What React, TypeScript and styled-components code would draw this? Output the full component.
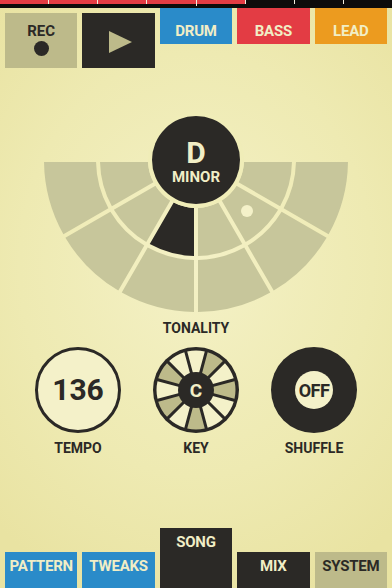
import React from 'react';
import styled, { createGlobalStyle } from 'styled-components';

// Palette
const DARK = '#2b2926';
const OLIVE = '#bdba8a';
const SEGMENT = '#c7c69b';
const PALE = '#f4f1c9';
const GAP = '#f0edb8';
const BLUE = '#2a8bc9';
const RED = '#e33c44';
const ORANGE = '#ec9b1f';
const LABEL = '#f1eec6';

const GlobalStyle = createGlobalStyle`
  html, body {
    margin: 0;
    padding: 0;
    background: #eee9b0;
  }
  * { box-sizing: border-box; }
`;

const Screen = styled.div`
  width: 392px;
  height: 588px;
  display: flex;
  flex-direction: column;
  overflow: hidden;
  background: radial-gradient(ellipse 75% 60% at 50% 45%, #f4f1c6 0%, #eeeab2 60%, #e9e3a2 100%);
  font-family: Roboto, 'Liberation Sans', sans-serif;
  font-weight: 700;
  color: ${DARK};
`;

/* progress strip at the very top */
const StepBar = styled.div`
  position: relative;
  display: flex;
  height: 8px;
  padding-bottom: 4px;
  background: #0d0c0b;
`;

const Step = styled.div<{ $done: boolean; $first: boolean }>`
  flex: 1;
  height: 4px;
  background: ${(p) => (p.$done ? RED : '#0d0c0b')};
  border-left: ${(p) => (p.$first ? 'none' : '1px solid #f2efe0')};
`;

const Playhead = styled.div`
  position: absolute;
  left: 196px;
  top: 0;
  width: 1px;
  height: 6px;
  background: #f2efe0;
`;

const Columns = styled.div<{ $align: string }>`
  display: grid;
  grid-template-columns: repeat(5, 1fr);
  column-gap: 5px;
  padding: 0 5px;
  align-items: ${(p) => p.$align};
`;

const TransportButton = styled.div<{ $bg: string }>`
  margin-top: 5px;
  height: 55px;
  background: ${(p) => p.$bg};
  display: flex;
  flex-direction: column;
  align-items: center;
  justify-content: center;
`;

const RecLabel = styled.span`
  font-size: 15px;
  line-height: 16px;
  margin-top: -2px;
`;

const RecDot = styled.span`
  width: 15px;
  height: 15px;
  margin-top: 2px;
  border-radius: 50%;
  background: ${DARK};
`;

const PlayIcon = styled.span`
  width: 0;
  height: 0;
  margin-left: 4px;
  margin-top: 3px;
  border-top: 11px solid transparent;
  border-bottom: 11px solid transparent;
  border-left: 23px solid ${OLIVE};
`;

const Tab = styled.div<{ $bg: string; $ink: string; $tall?: boolean; $top?: boolean }>`
  height: ${(p) => (p.$tall ? '60px' : '36px')};
  background: ${(p) => p.$bg};
  color: ${(p) => p.$ink};
  font-size: 15px;
  line-height: 16px;
  text-align: center;
  padding-top: ${(p) => (p.$top ? '15px' : '6px')};
  white-space: nowrap;
  letter-spacing: -0.2px;
`;

/* tonality fan */
const TonalitySection = styled.section`
  margin-top: 42px;
  display: flex;
  flex-direction: column;
  align-items: center;
`;

const Fan = styled.div`
  position: relative;
  width: 304px;
  height: 204px;
`;

const CenterDisc = styled.div`
  position: absolute;
  left: 108px;
  top: 6px;
  width: 88px;
  height: 88px;
  border-radius: 50%;
  background: ${DARK};
  box-shadow: 0 0 0 4px ${GAP};
  color: ${LABEL};
  display: flex;
  flex-direction: column;
  align-items: center;
  justify-content: center;
`;

const KeyLetter = styled.span`
  font-size: 30px;
  line-height: 26px;
  margin-top: 4px;
`;

const ModeName = styled.span`
  font-size: 15px;
  line-height: 16px;
  margin-top: 3px;
`;

const Caption = styled.div`
  font-size: 14px;
  line-height: 16px;
  margin-top: 6px;
  text-align: center;
`;

/* knob row */
const KnobRow = styled.div`
  margin-top: 11px;
  display: grid;
  grid-template-columns: repeat(3, 118px);
  padding: 0 19px;
`;

const KnobCell = styled.div`
  display: flex;
  flex-direction: column;
  align-items: center;
`;

const KnobLabel = styled.div`
  margin-top: 7px;
  font-size: 14px;
  line-height: 16px;
`;

const TempoKnob = styled.div`
  width: 86px;
  height: 86px;
  border-radius: 50%;
  border: 3px solid ${DARK};
  background: ${PALE};
  display: flex;
  align-items: center;
  justify-content: center;
  font-size: 30px;
  padding-bottom: 2px;
`;

const KeyKnob = styled.div`
  position: relative;
  width: 86px;
  height: 86px;
`;

const KeyHub = styled.div`
  position: absolute;
  left: 25px;
  top: 25px;
  width: 36px;
  height: 36px;
  border-radius: 50%;
  background: ${DARK};
  color: ${LABEL};
  display: flex;
  align-items: center;
  justify-content: center;
  font-size: 19px;
`;

const ShuffleKnob = styled.div`
  width: 86px;
  height: 86px;
  border-radius: 50%;
  background: ${DARK};
  display: flex;
  align-items: center;
  justify-content: center;
`;

const ShuffleHub = styled.div`
  width: 38px;
  height: 38px;
  border-radius: 50%;
  background: ${PALE};
  display: flex;
  align-items: center;
  justify-content: center;
  font-size: 18px;
  letter-spacing: -0.5px;
`;

const Spacer = styled.div`
  flex: 1;
`;

const rad = (d: number) => (d * Math.PI) / 180;

function sector(cx: number, cy: number, r1: number, r2: number, a1: number, a2: number, gap: number) {
  const h = gap / 2;
  const off = (r: number) => (h / r) * (180 / Math.PI);
  const pt = (r: number, a: number) => `${(cx + r * Math.cos(rad(a))).toFixed(2)} ${(cy + r * Math.sin(rad(a))).toFixed(2)}`;
  const a1i = a1 + off(r1);
  const a1o = a1 + off(r2);
  const a2o = a2 - off(r2);
  const a2i = a2 - off(r1);
  return `M ${pt(r1, a1i)} L ${pt(r2, a1o)} A ${r2} ${r2} 0 0 1 ${pt(r2, a2o)} L ${pt(r1, a2i)} A ${r1} ${r1} 0 0 0 ${pt(r1, a1i)} Z`;
}

const rings = [
  { r1: 48, r2: 96 },
  { r1: 100, r2: 152 },
];

const TonalityFan = () => (
  <svg width="304" height="204" viewBox="0 0 304 204">
    {rings.map((ring, ri) =>
      [0, 1, 2, 3, 4, 5].map((i) => {
        const active = ri === 0 && i === 3;
        return (
          <path
            key={`${ri}-${i}`}
            d={sector(152, 50, ring.r1, ring.r2, i * 30, (i + 1) * 30, 4)}
            fill={active ? DARK : SEGMENT}
          />
        );
      })
    )}
    <circle cx="203" cy="101" r="6" fill={PALE} />
  </svg>
);

const blackKeys = [1, 3, 6, 8, 10];

const KeyWheel = () => (
  <svg width="86" height="86" viewBox="0 0 86 86">
    <circle cx="43" cy="43" r="43" fill={DARK} />
    {Array.from({ length: 12 }, (_, i) => (
      <path
        key={i}
        d={sector(43, 43, 17, 39.5, -105 + i * 30, -75 + i * 30, 3)}
        fill={blackKeys.includes(i) ? OLIVE : PALE}
      />
    ))}
  </svg>
);

const steps = [0, 1, 2, 3, 4, 5, 6, 7];

export default function App() {
  return (
    <>
      <GlobalStyle />
      <Screen>
        <StepBar>
          {steps.map((s) => (
            <Step key={s} $done={s < 5} $first={s === 0} />
          ))}
          <Playhead />
        </StepBar>

        <Columns $align="start">
          <TransportButton $bg={OLIVE}>
            <RecLabel>REC</RecLabel>
            <RecDot />
          </TransportButton>
          <TransportButton $bg={DARK}>
            <PlayIcon />
          </TransportButton>
          <Tab $bg={BLUE} $ink={LABEL} $top>DRUM</Tab>
          <Tab $bg={RED} $ink={LABEL} $top>BASS</Tab>
          <Tab $bg={ORANGE} $ink={LABEL} $top>LEAD</Tab>
        </Columns>

        <TonalitySection>
          <Fan>
            <TonalityFan />
            <CenterDisc>
              <KeyLetter>D</KeyLetter>
              <ModeName>MINOR</ModeName>
            </CenterDisc>
          </Fan>
          <Caption>TONALITY</Caption>
        </TonalitySection>

        <KnobRow>
          <KnobCell>
            <TempoKnob>136</TempoKnob>
            <KnobLabel>TEMPO</KnobLabel>
          </KnobCell>
          <KnobCell>
            <KeyKnob>
              <KeyWheel />
              <KeyHub>C</KeyHub>
            </KeyKnob>
            <KnobLabel>KEY</KnobLabel>
          </KnobCell>
          <KnobCell>
            <ShuffleKnob>
              <ShuffleHub>OFF</ShuffleHub>
            </ShuffleKnob>
            <KnobLabel>SHUFFLE</KnobLabel>
          </KnobCell>
        </KnobRow>

        <Spacer />

        <Columns $align="end">
          <Tab $bg={BLUE} $ink={LABEL}>PATTERN</Tab>
          <Tab $bg={BLUE} $ink={LABEL}>TWEAKS</Tab>
          <Tab $bg={DARK} $ink={LABEL} $tall>SONG</Tab>
          <Tab $bg={DARK} $ink={LABEL}>MIX</Tab>
          <Tab $bg={OLIVE} $ink={DARK}>SYSTEM</Tab>
        </Columns>
      </Screen>
    </>
  );
}
